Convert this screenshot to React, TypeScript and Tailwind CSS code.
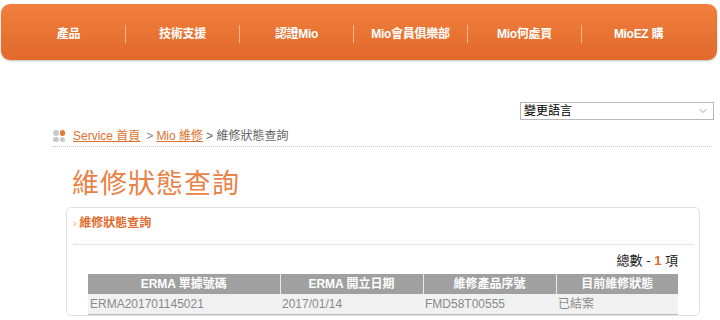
import { ChevronDown } from 'lucide-react';

const navItems = ['產品', '技術支援', '認證Mio', 'Mio會員俱樂部', 'Mio何處買', 'MioEZ 購'];

const cols = [
  { title: 'ERMA 單據號碼', w: 'w-[192px]', value: 'ERMA201701145021' },
  { title: 'ERMA 開立日期', w: 'w-[143px]', value: '2017/01/14' },
  { title: '維修產品序號', w: 'w-[133px]', value: 'FMD58T00555' },
  { title: '目前維修狀態', w: 'w-[122px]', value: '已結案' },
];

export default function App() {
  return (
    <div
      className="w-[720px] h-[320px] overflow-hidden bg-white"
      style={{ fontFamily: '"Liberation Sans", Arial, "Noto Sans CJK TC", sans-serif' }}
    >
      {/* top nav */}
      <div className="pt-[4px] pl-[1px] pr-[3px]">
        <div className="h-[56px] rounded-[9px] bg-gradient-to-b from-[#f27f3c] to-[#e0692b] shadow-[0_1px_2px_rgba(0,0,0,0.25)] flex items-center pl-[11px] pt-[3px]">
          {navItems.map((n, i) => (
            <div key={n} className="flex items-center">
              {i > 0 && <div className="w-px h-[18px] bg-[#f6b889]" />}
              <div className="w-[113px] text-center text-white font-bold text-[12px] tracking-[-0.3px]">{n}</div>
            </div>
          ))}
        </div>
      </div>

      {/* language select */}
      <div className="flex justify-end pr-[6px] pt-[42px]">
        <div className="w-[194px] h-[18px] border border-[#b8b8b8] flex items-center justify-between pl-[3px] pr-[4px] text-[12px] text-black">
          <span>變更語言</span>
          <ChevronDown size={12} strokeWidth={1.5} className="text-[#888]" />
        </div>
      </div>

      {/* breadcrumb */}
      <div className="ml-[52px] mr-[8px] mt-[8px] pb-[2px] border-b border-dotted border-[#c8c8c8] flex items-center text-[12px] leading-[16px]">
        <div className="grid grid-cols-2 gap-[1px] w-[12px] h-[12px] mr-[8px] ml-[1px]">
          <span className="rounded-full bg-[#c8c8c8]" />
          <span className="rounded-full bg-[#e8783a]" />
          <span className="rounded-full bg-[#c8c8c8]" />
          <span className="rounded-full bg-[#c8c8c8]" />
        </div>
        <span className="text-[#e0712f] underline">Service 首頁</span>
        <span className="text-[#888] ml-[6px] mr-[3px]">&gt;</span>
        <span className="text-[#e0712f] underline">Mio 維修</span>
        <span className="text-[#666] ml-[3px]">&gt; 維修狀態查詢</span>
      </div>

      {/* title */}
      <h1 className="ml-[72px] mt-[21px] text-[27px] leading-[32px] text-[#ea8148] tracking-[1px]">維修狀態查詢</h1>

      {/* panel */}
      <div className="ml-[66px] mr-[20px] mt-[7px] border border-[#e2e2e2] rounded-[5px] pt-[6px] px-[6px]">
        <div className="flex items-center text-[12px] font-bold text-[#e0692b] pb-[12px] border-b border-dotted border-[#cfcfcf]">
          <span className="text-[#f0a070] font-normal mr-[3px] text-[10px]">›</span>
          維修狀態查詢
        </div>
        <div className="ml-[15px] mr-[15px]">
          <div className="text-right text-[13px] text-[#222] mt-[8px] leading-[16px]">
            總數 - <span className="text-[#e0692b] font-bold">1</span> 項
          </div>
          <table className="mt-[5px] border-collapse text-[12px]">
            <thead>
              <tr>
                {cols.map((c, i) => (
                  <th
                    key={c.title}
                    className={`${c.w} h-[20px] bg-[#a0a0a0] text-white font-bold text-center ${i > 0 ? 'border-l border-[#e8e8e8]' : ''}`}
                  >
                    {c.title}
                  </th>
                ))}
              </tr>
            </thead>
            <tbody>
              <tr className="border-b border-[#bbb]">
                {cols.map((c) => (
                  <td key={c.title} className="h-[20px] bg-[#f1f1f1] text-[#8a8a8a] text-left pl-[2px]">
                    {c.value}
                  </td>
                ))}
              </tr>
            </tbody>
          </table>
        </div>
      </div>
    </div>
  );
}
